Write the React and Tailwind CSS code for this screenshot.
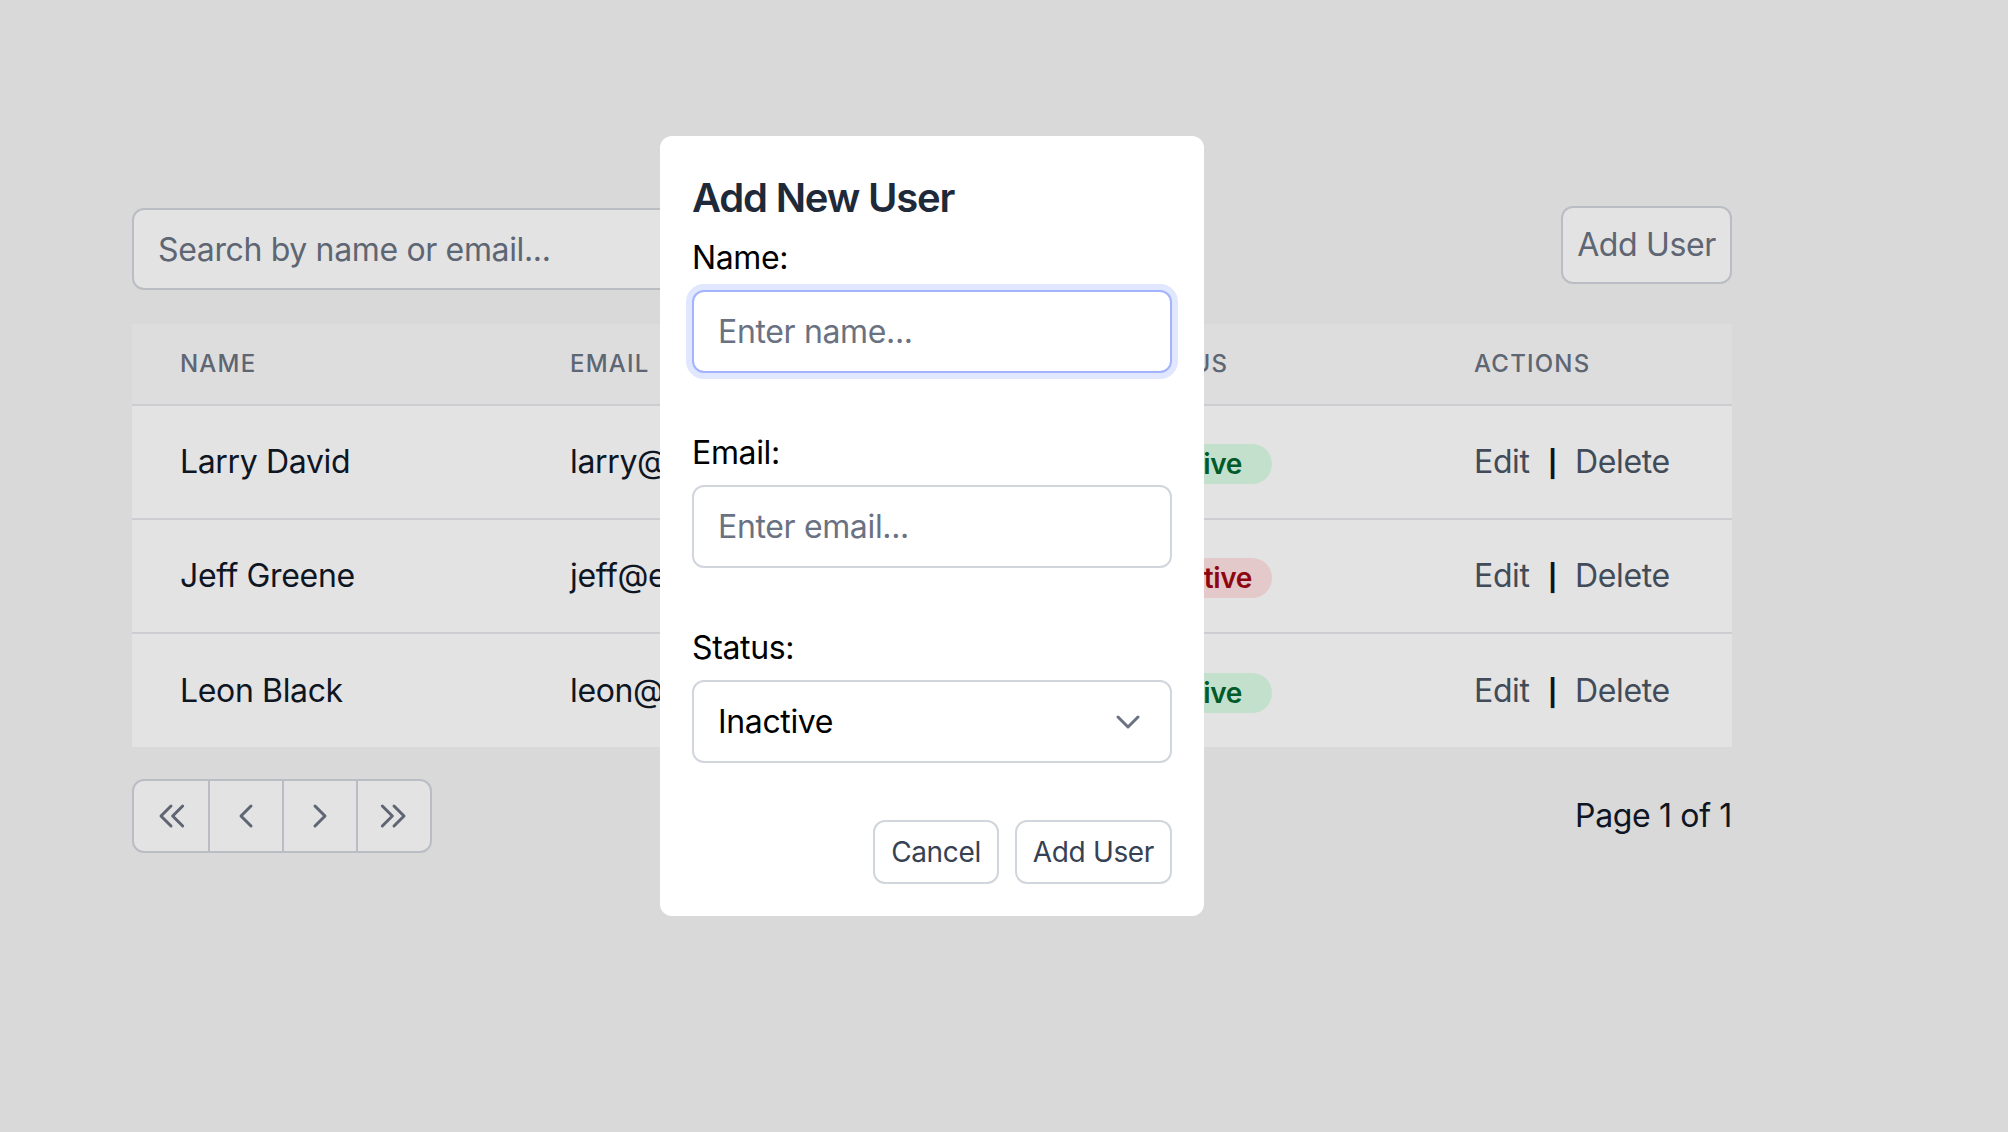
import React from "react";

const users = [
  { name: "Larry David", email: "larry@example.com", status: "Active" },
  { name: "Jeff Greene", email: "jeff@example.com", status: "Inactive" },
  { name: "Leon Black", email: "leon@example.com", status: "Active" },
];

function Chev({ d }) {
  return (
    <svg width="20" height="20" viewBox="0 0 24 24" fill="none" stroke="currentColor" strokeWidth="1.8" strokeLinecap="round" strokeLinejoin="round">
      <path d={d} />
    </svg>
  );
}

export default function App() {
  return (
    <div className="relative min-h-screen bg-[#f4f4f4] font-['Inter',sans-serif] tracking-[-0.011em] text-black">
      <div className="[zoom:2] w-[932px]">
        <div className="mx-auto max-w-4xl px-12 pt-[104px]">
          <div className="flex items-start justify-between">
            <input
              placeholder="Search by name or email..."
              className="h-[41px] w-1/2 rounded-md border border-gray-300 bg-white px-3 text-base text-gray-900 outline-none placeholder:text-gray-500"
            />
            <button className="-mt-px h-[39px] rounded-md border border-gray-300 bg-white px-[7px] text-base text-gray-500">
              Add User
            </button>
          </div>

          <table className="mt-[17px] w-full table-fixed border-collapse bg-white">
            <colgroup>
              <col className="w-[195px]" />
              <col className="w-[279px]" />
              <col className="w-[173px]" />
              <col className="w-[153px]" />
            </colgroup>
            <thead className="border-b border-gray-200 bg-[#f9f9fa]">
              <tr>
                <th className="px-6 py-3 text-left text-xs font-medium uppercase leading-4 tracking-wider text-gray-500">Name</th>
                <th className="px-6 py-3 text-left text-xs font-medium uppercase leading-4 tracking-wider text-gray-500">Email</th>
                <th className="px-6 py-3 text-left text-xs font-medium uppercase leading-4 tracking-wider text-gray-500">Status</th>
                <th className="px-6 py-3 text-left text-xs font-medium uppercase leading-4 tracking-wider text-gray-500">Actions</th>
              </tr>
            </thead>
            <tbody className="divide-y divide-gray-200">
              {users.map((u) => (
                <tr key={u.name}>
                  <td className="h-[57px] whitespace-nowrap px-6 py-0 text-base leading-6 text-gray-900">{u.name}</td>
                  <td className="h-[57px] whitespace-nowrap px-6 py-0 text-base leading-6 text-gray-900">{u.email}</td>
                  <td className="h-[57px] whitespace-nowrap px-6 py-0 leading-6">
                    {u.status === "Active" ? (
                      <span className="inline-block w-[72px] rounded-full bg-green-100 text-center align-middle text-sm font-semibold leading-5 text-green-800">Active</span>
                    ) : (
                      <span className="inline-block w-[72px] rounded-full bg-red-100 text-center align-middle text-sm font-semibold leading-5 text-red-800">Inactive</span>
                    )}
                  </td>
                  <td className="h-[57px] whitespace-nowrap px-6 py-0 text-base leading-6">
                    <span className="text-gray-600">Edit</span>
                    <span className="mx-[9px] text-[13px] font-bold leading-none text-gray-900">|</span>
                    <span className="text-gray-600">Delete</span>
                  </td>
                </tr>
              ))}
            </tbody>
          </table>

          <div className="mt-4 flex items-center justify-between">
            <div className="inline-flex overflow-hidden rounded-md border border-gray-300 bg-white text-gray-500">
              <button className="flex h-[35px] w-[37px] items-center justify-center">
                <Chev d="M12 18l-6-6 6-6M19 18l-6-6 6-6" />
              </button>
              <button className="flex h-[35px] w-[37px] items-center justify-center border-l border-gray-300">
                <Chev d="M15 18l-6-6 6-6" />
              </button>
              <button className="flex h-[35px] w-[37px] items-center justify-center border-l border-gray-300">
                <Chev d="M9 18l6-6-6-6" />
              </button>
              <button className="flex h-[35px] w-[37px] items-center justify-center border-l border-gray-300">
                <Chev d="M5 18l6-6-6-6M12 18l6-6-6-6" />
              </button>
            </div>
            <span className="text-base text-gray-900">Page 1 of 1</span>
          </div>
        </div>
      </div>

      <div className="fixed inset-0 bg-black/[0.11]" />

      <div className="fixed inset-0">
        <div className="[zoom:2] flex w-[932px] justify-center pt-[68px]">
          <div className="w-[272px] rounded-md bg-white p-4">
            <h2 className="mb-1 pt-px text-xl font-semibold leading-7 tracking-[-0.03em] text-gray-800">Add New User</h2>

            <label className="mb-1 block text-base leading-6 text-black">Name:</label>
            <input
              placeholder="Enter name..."
              className="mb-[28px] block h-[41.5px] w-full rounded-md border border-indigo-300 bg-white px-3 text-base text-gray-900 outline-none ring-[3px] ring-indigo-100 placeholder:text-gray-500"
            />

            <label className="mb-1 block text-base leading-6 text-black">Email:</label>
            <input
              placeholder="Enter email..."
              className="mb-[28px] block h-[41.5px] w-full rounded-md border border-gray-300 bg-white px-3 text-base text-gray-900 outline-none placeholder:text-gray-500"
            />

            <label className="mb-1 block text-base leading-6 text-black">Status:</label>
            <div className="relative mb-[28.5px]">
              <select
                defaultValue="Inactive"
                className="block h-[41.5px] w-full appearance-none rounded-md border border-gray-300 bg-white px-3 text-base text-black outline-none"
              >
                <option>Active</option>
                <option>Inactive</option>
              </select>
              <svg className="pointer-events-none absolute right-3 top-1/2 -translate-y-1/2 text-gray-500" width="20" height="20" viewBox="0 0 24 24" fill="none" stroke="currentColor" strokeWidth="1.8" strokeLinecap="round" strokeLinejoin="round">
                <path d="M6 9l6 6 6-6" />
              </svg>
            </div>

            <div className="flex justify-end gap-2">
              <button className="h-[32px] rounded-md border border-gray-300 bg-white px-2 text-sm text-gray-700">Cancel</button>
              <button className="h-[32px] rounded-md border border-gray-300 bg-white px-2 text-sm text-gray-700">Add User</button>
            </div>
          </div>
        </div>
      </div>
    </div>
  );
}
